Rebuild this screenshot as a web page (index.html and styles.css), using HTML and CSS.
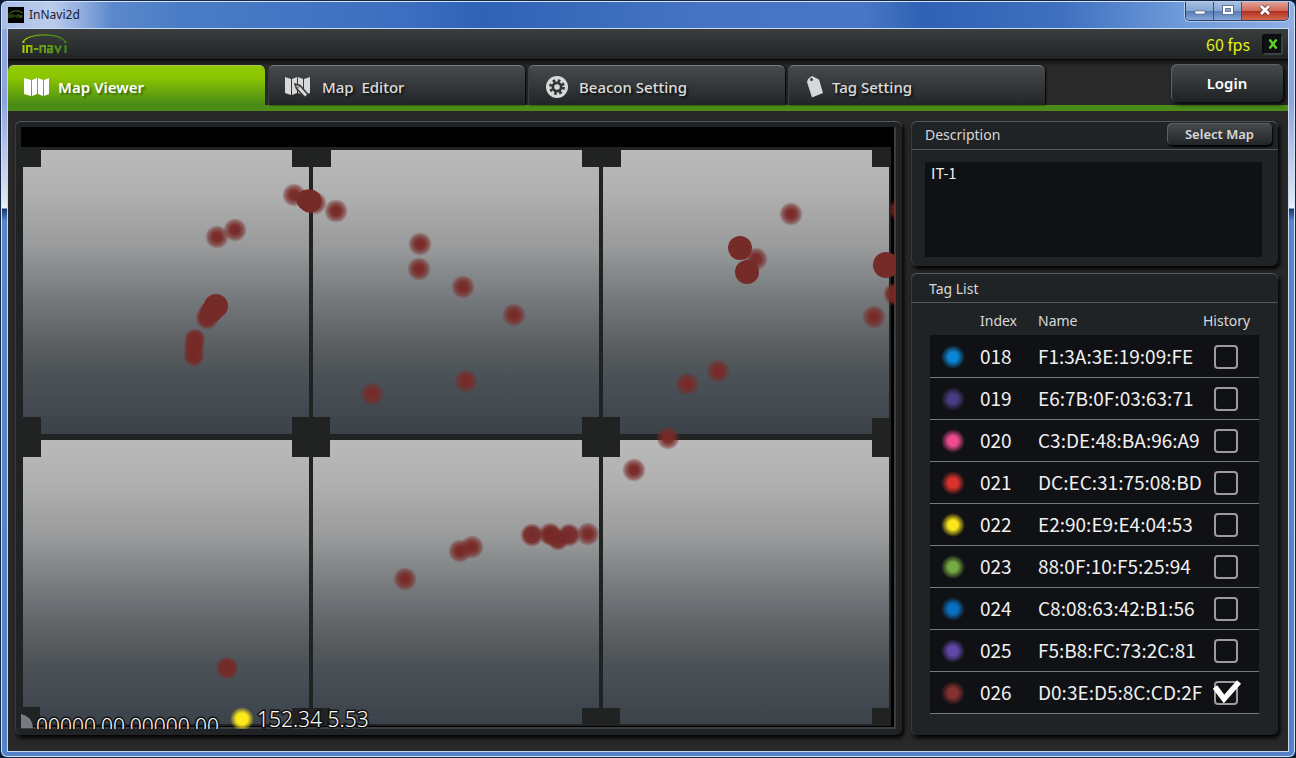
FILE: index.html
```html
<!DOCTYPE html>
<html lang="en">
<head>
<meta charset="utf-8">
<title>InNavi2d</title>
<link rel="stylesheet" href="styles.css">
</head>
<body>
<div class="window">
  <header class="titlebar">
    <svg class="app-icon" width="16" height="16" viewBox="0 0 16 16" aria-hidden="true"><rect width="16" height="16" fill="#000"/><path d="M1 7Q7 1 15 6" fill="none" stroke="#4f7a18"/><path d="M1 7v4M3 11V8h2v3M6 9h2M9 11V8h2v3M12 8l1 3 1-3" fill="none" stroke="#3f6a18"/></svg>
    <span class="window-title">InNavi2d</span>
    <div class="window-buttons">
      <button class="wbtn" aria-label="Minimize"><svg width="12" height="12" viewBox="0 0 12 12"><rect x="1" y="7" width="10" height="3" fill="#fff" stroke="#4c5c7a" stroke-width=".6"/></svg></button>
      <button class="wbtn" aria-label="Maximize"><svg width="12" height="12" viewBox="0 0 12 12"><rect x="2" y="3" width="8" height="6" fill="none" stroke="#45557a" stroke-width="4"/><rect x="2" y="3" width="8" height="6" fill="none" stroke="#fff" stroke-width="2.4"/></svg></button>
      <button class="wbtn wbtn-close" aria-label="Close"><svg width="14" height="12" viewBox="0 0 14 12"><path d="M3 2l8 8M11 2l-8 8" stroke="#6b3038" stroke-width="4.4"/><path d="M3 2l8 8M11 2l-8 8" stroke="#fff" stroke-width="2.8"/></svg></button>
    </div>
  </header>
  <main class="app">
    <div class="brandbar">
      <svg class="logo" width="46" height="20" viewBox="0 0 46 20" role="img" aria-label="in-navi">
        <defs><linearGradient id="brand" x1="0" x2="46" y1="0" y2="0" gradientUnits="userSpaceOnUse"><stop offset="0" stop-color="#b4d000"/><stop offset=".35" stop-color="#6ba414"/><stop offset="1" stop-color="#43831c"/></linearGradient></defs>
        <path d="M1 8C6-1 36-2 44 8" fill="none" stroke="url(#brand)" stroke-width="1.1"/>
        <path d="M1.500 11v8M5 19v-7h4.500v7M12 15h4.500M18.500 19v-7H23v7M25.500 12H30v6.200h-4v-3h4M33 11.500l3 6.500 3-6.500M43.500 11v8M1.500 7v2M43.500 7v2" fill="none" stroke="url(#brand)" stroke-width="2"/>
      </svg>
      <span class="fps">60 fps</span>
      <button class="exit" aria-label="Exit"><svg width="10" height="10" viewBox="0 0 10 10"><path d="M1.500 .5l7 9M8.500 .5l-7 9" stroke="#5fd420" stroke-width="2.400"/></svg></button>
    </div>
    <nav class="tabs">
      <button class="tab tab-active"><svg width="26" height="20" viewBox="0 0 26 20"><path fill="#fff" d="M0 1l7 2v16l-7-2zM8 3l5-2v16l-5 2zM14 1l5 2v16l-5-2zM20 3l5-2v16l-5 2z"/></svg><span>Map Viewer</span></button>
      <button class="tab tab-editor"><svg width="26" height="22" viewBox="0 0 26 22"><path fill="#d8d8d8" d="M1 1l6 2v16l-6-2zM8 3l5-2v16l-5 2zM14 1l5 2v16l-5-2zM20 3l6-2v16l-6 2z"/><path d="M11 8l5 1.500 8 9-3 3-8.500-9z" fill="#d8d8d8" stroke="#35383a" stroke-width="1.500"/><path d="M12.500 13l3.500-3.500" stroke="#35383a"/></svg><span>Map&nbsp; Editor</span></button>
      <button class="tab tab-beacon"><svg width="22" height="22" viewBox="0 0 22 22"><circle cx="11" cy="11" r="11" fill="#d8d8d8"/><circle cx="11" cy="11" r="5.500" fill="#323537"/><circle cx="11" cy="11" r="6.500" fill="none" stroke="#323537" stroke-width="2.800" stroke-dasharray="2.600 2.505"/><circle cx="11" cy="11" r="2.800" fill="#d8d8d8"/></svg><span>Beacon Setting</span></button>
      <button class="tab tab-tag"><svg width="18" height="22" viewBox="0 0 18 22"><path fill="#d8d8d8" d="M2 3L6 0l6 3q1 0 1.500 2L17 17 6 21.500 1 6z"/><circle cx="5.500" cy="3.500" r="1.500" fill="#3b3e40"/></svg><span>Tag Setting</span></button>
      <button class="login">Login</button>
    </nav>
    <div class="content">
      <section class="panel map-panel">
        <svg class="map" width="100%" height="100%" role="img" aria-label="Map with beacon positions">
          <defs>
            <linearGradient id="cell" x1="0" y1="0" x2="0" y2="1"><stop offset="0" stop-color="#bababa"/><stop offset=".15" stop-color="#b0b0b0"/><stop offset=".35" stop-color="#98999a"/><stop offset=".42" stop-color="#888c8d"/><stop offset=".58" stop-color="#6c6f73"/><stop offset=".73" stop-color="#55595b"/><stop offset=".79" stop-color="#4b5359"/><stop offset="1" stop-color="#3b4249"/></linearGradient>
            <radialGradient id="soft"><stop offset="0" stop-color="#792826"/><stop offset=".4" stop-color="#782b29" stop-opacity=".95"/><stop offset=".75" stop-color="#782b29" stop-opacity=".55"/><stop offset="1" stop-color="#782b29" stop-opacity="0"/></radialGradient>
            <radialGradient id="dense"><stop offset="0" stop-color="#752826"/><stop offset=".65" stop-color="#752a28" stop-opacity=".92"/><stop offset="1" stop-color="#782b29" stop-opacity="0"/></radialGradient>
            <radialGradient id="yellow"><stop offset="0" stop-color="#ffed18"/><stop offset=".5" stop-color="#fbe41c"/><stop offset="1" stop-color="#fbe41c" stop-opacity="0"/></radialGradient>
          </defs>
          <g transform="translate(-21 -127)">
            <rect x="21" y="127" width="875" height="602" fill="#000"/>
            <rect x="21" y="147" width="870" height="579" fill="#212222"/>
            <g fill="url(#cell)">
              <rect x="23" y="150" width="286" height="284"/><rect x="313" y="150" width="286" height="284"/><rect x="603" y="150" width="286" height="284"/>
              <rect x="23" y="440" width="286" height="284"/><rect x="313" y="440" width="286" height="284"/><rect x="603" y="440" width="286" height="284"/>
            </g>
            <g fill="#212222">
              <rect x="21" y="147" width="20" height="20"/><rect x="292" y="147" width="39" height="20"/><rect x="582" y="147" width="39" height="20"/><rect x="872" y="147" width="19" height="20"/>
              <rect x="21" y="417" width="20" height="40"/><rect x="292" y="417" width="38" height="40"/><rect x="582" y="417" width="38" height="40"/><rect x="872" y="418" width="19" height="39"/>
              <rect x="21" y="707" width="19" height="19"/><rect x="292" y="708" width="38" height="18"/><rect x="582" y="708" width="38" height="18"/><rect x="872" y="708" width="19" height="18"/>
            </g>
            <path d="M895 127v601M21 728H896" stroke="#3c3d3e" stroke-width="2" fill="none"/>
            <g fill="url(#soft)">
              <circle cx="217" cy="237" r="12"/><circle cx="235" cy="230" r="12"/><circle cx="294" cy="195" r="12"/><circle cx="315" cy="203" r="12"/><circle cx="336" cy="211" r="12"/>
              <circle cx="420" cy="244" r="12"/><circle cx="419" cy="269" r="12"/><circle cx="463" cy="287" r="12"/><circle cx="514" cy="315" r="12"/><circle cx="466" cy="381" r="12"/><circle cx="372" cy="394" r="12"/>
              <circle cx="791" cy="214" r="12"/><circle cx="756" cy="259" r="12"/><circle cx="874" cy="317" r="12"/><circle cx="687" cy="384" r="12"/><circle cx="718" cy="371" r="12"/><circle cx="668" cy="438" r="12"/><circle cx="634" cy="470" r="12"/>
              <circle cx="405" cy="579" r="12"/><circle cx="460" cy="551" r="12"/><circle cx="472" cy="547" r="12"/><circle cx="588" cy="534" r="12"/><circle cx="550" cy="534" r="12"/><circle cx="900" cy="210" r="12"/>
            </g>
            <g fill="url(#dense)">
              <circle cx="195" cy="339" r="11"/><circle cx="194" cy="347" r="11"/><circle cx="194" cy="356" r="11"/><circle cx="207" cy="318" r="12"/><circle cx="210" cy="313" r="12"/>
              <circle cx="532" cy="535" r="12"/><circle cx="551" cy="535" r="11"/><circle cx="558" cy="540" r="11"/><circle cx="569" cy="535" r="12"/><circle cx="227" cy="668" r="12"/><circle cx="895" cy="294" r="12"/>
            </g>
            <g fill="#752b28">
              <circle cx="310" cy="201" r="11.500"/><circle cx="307" cy="200" r="10.500"/><circle cx="216" cy="306" r="12"/><circle cx="212" cy="311" r="11"/><circle cx="740" cy="248" r="12"/><circle cx="747" cy="272" r="12"/><circle cx="886" cy="265" r="13"/>
            </g>
            <path d="M21 714q11 2 12 14H21z" fill="#777a80"/>
            <circle cx="242" cy="719" r="12" fill="url(#yellow)"/>
            <text class="coords" x="36" y="734">00000.00,00000.00</text>
            <text class="coords" x="257" y="727">152.34 5.53</text>
          </g>
        </svg>
      </section>
      <aside class="side">
        <section class="panel description">
          <div class="panel-head"><label for="desc">Description</label><button class="select-map">Select Map</button></div>
          <textarea id="desc" class="desc-text" readonly>IT-1</textarea>
        </section>
        <section class="panel tag-panel">
          <div class="panel-head tag-head"><h2>Tag List</h2></div>
          <table class="tags">
            <thead><tr><th class="c-dot"></th><th class="c-index">Index</th><th class="c-name">Name</th><th class="c-hist">History</th></tr></thead>
            <tbody>
              <tr><td><i class="dot blue"></i></td><td>018</td><td>F1:3A:3E:19:09:FE</td><td class="check"><input type="checkbox" aria-label="History 018"></td></tr>
              <tr><td><i class="dot indigo"></i></td><td>019</td><td>E6:7B:0F:03:63:71</td><td class="check"><input type="checkbox" aria-label="History 019"></td></tr>
              <tr><td><i class="dot pink"></i></td><td>020</td><td>C3:DE:48:BA:96:A9</td><td class="check"><input type="checkbox" aria-label="History 020"></td></tr>
              <tr><td><i class="dot red"></i></td><td>021</td><td>DC:EC:31:75:08:BD</td><td class="check"><input type="checkbox" aria-label="History 021"></td></tr>
              <tr><td><i class="dot yellow"></i></td><td>022</td><td>E2:90:E9:E4:04:53</td><td class="check"><input type="checkbox" aria-label="History 022"></td></tr>
              <tr><td><i class="dot green"></i></td><td>023</td><td>88:0F:10:F5:25:94</td><td class="check"><input type="checkbox" aria-label="History 023"></td></tr>
              <tr><td><i class="dot azure"></i></td><td>024</td><td>C8:08:63:42:B1:56</td><td class="check"><input type="checkbox" aria-label="History 024"></td></tr>
              <tr><td><i class="dot violet"></i></td><td>025</td><td>F5:B8:FC:73:2C:81</td><td class="check"><input type="checkbox" aria-label="History 025"></td></tr>
              <tr><td><i class="dot maroon"></i></td><td>026</td><td>D0:3E:D5:8C:CD:2F</td><td class="check"><input type="checkbox" aria-label="History 026" checked><svg class="tick" width="30" height="26" viewBox="0 0 30 26"><path d="M3 8l9 12L27 3" fill="none" stroke="#fff" stroke-width="5.500"/></svg></td></tr>
            </tbody>
          </table>
        </section>
      </aside>
    </div>
  </main>
</div>
</body>
</html>
```
FILE: styles.css
```css
* { box-sizing: border-box; }
body { margin: 0; background: #0a1a30; font-family: "Noto Sans", sans-serif; color: #d8d8d8; }
button { font: inherit; color: inherit; margin: 0; padding: 0; }
h2 { margin: 0; font: inherit; }

.window {
  min-height: 100vh;
  display: flex;
  flex-direction: column;
  padding: 0 7px 6px;
  border: 1px solid #14284c;
  border-radius: 7px;
  background: linear-gradient(#8fa9dd 0, #8ea4de 100px, #dfe6f2 200px, #eef2f8 207px, #16386f 208px, #5885cb 220px, #5482c8 100%);
  box-shadow: inset 0 0 0 1px #d5e4f7;
}
.titlebar {
  display: flex;
  align-items: center;
  height: 27px;
  margin: 1px -6px 0;
  padding: 0 0 2px 6px;
  border-radius: 6px 6px 0 0;
  background: linear-gradient(90deg, #a9bee6 0, #bccdec 50px, #8fadde 80px, #5b88cc 110px, #4a7cc6 180px, #3c6fc0 400px, #2f63b6 480px, #4674c2 700px, #4a77c5 860px, #2f62b4 920px, #3f70c0 1060px, #6f9bda 1180px, #8fb0e4 100%);
}
.window-title { margin-left: 5px; font-size: 12px; line-height: 16px; color: #16202e; flex: 1; }
.window-buttons {
  display: flex;
  align-self: flex-start;
  margin-right: 5px;
  border: 1px solid #2a3f66;
  border-top: 0;
  border-radius: 0 0 5px 5px;
  overflow: hidden;
  box-shadow: 0 0 0 1px #b5cbec;
}
.wbtn {
  display: flex;
  align-items: center;
  justify-content: center;
  width: 28px;
  height: 18px;
  padding-bottom: 2px;
  border: 0;
  border-right: 1px solid #3c5484;
  background: linear-gradient(#a9c0e2, #86a4d2 48%, #5579b3 50%, #84a8d8);
}
.wbtn-close { width: 46px; border-right: 0; background: linear-gradient(#e0a196, #cf6a5a 48%, #b22c20 50%, #d06a50); }

.app { flex: 1; display: flex; flex-direction: column; background: #282828; outline: 1px solid #c3d9f4; }
.brandbar {
  display: flex;
  align-items: center;
  height: 31px;
  padding: 0 5px 0 14px;
  background: linear-gradient(#3a3e3f, #212425);
  border-bottom: 1px solid #050505;
}
.fps { margin-left: auto; font-family: "Noto Sans CJK KR", sans-serif; font-size: 16px; line-height: 20px; color: #e4f010; }
.exit {
  display: flex;
  align-items: center;
  justify-content: center;
  width: 21px;
  height: 21px;
  margin-left: 12px;
  border: 2px solid #3c4144;
  border-top-color: #0a0b0b;
  border-left-color: #0a0b0b;
  border-radius: 3px;
  background: #0e1011;
}
.tabs {
  display: flex;
  align-items: flex-end;
  gap: 3px;
  height: 51px;
  padding-right: 5px;
  border-bottom: 6px solid #4b8b17;
  background: linear-gradient(#141414, #292929 6px);
}
.tab {
  display: flex;
  align-items: center;
  gap: 8px;
  width: 257px;
  height: 40px;
  padding: 4px 0 0 16px;
  border: 0;
  border-radius: 6px 6px 0 0;
  background: linear-gradient(#474b4d, #222527);
  box-shadow: inset 0 2px 0 -1px #777b7d, inset 1px 0 0 #3a3d3f, 1px 0 2px #000;
  font-size: 15px;
  line-height: 24px;
  font-weight: 500;
  color: #dcdcdc;
  text-shadow: 2px 2px 2px #111;
}
.tab-active { background: linear-gradient(#90ca00, #8cc600 30%, #4a8b18); box-shadow: inset 0 2px 0 -1px #a9c45c; color: #fff; font-weight: 600; text-shadow: 2px 2px 2px #3a6a10; }
.tab-editor { gap: 12px; }
.tab-beacon { padding-left: 18px; gap: 11px; }
.tab-tag { padding-left: 18px; }
.login {
  align-self: flex-start;
  width: 112px;
  height: 38px;
  margin: 4px 0 0 auto;
  border: 0;
  border-radius: 6px;
  background: linear-gradient(#474b4d, #1e2123);
  box-shadow: inset 1px 1px 0 #5d6163, 2px 2px 4px #000;
  font-size: 15px;
  line-height: 24px;
  font-weight: 600;
  color: #fff;
}
.content { flex: 1; display: flex; gap: 9px; padding: 10px 10px 16px 7px; }
.panel {
  border-radius: 6px;
  background: #202325;
  box-shadow: inset 0 1px 0 #56595b, inset 1px 0 0 #37393b, 2px 3px 4px #000;
}
.map-panel { flex: 1; min-width: 0; padding: 6px; display: flex; position: relative; }
.map { display: block; flex: 1; min-width: 0; height: auto; }
.coords { font-family: "Noto Sans", sans-serif; font-weight: 300; font-size: 21px; fill: #fff; stroke: #111; stroke-width: 3px; paint-order: stroke; }

.side { width: 367px; display: flex; flex-direction: column; gap: 7px; }
.description { height: 145px; display: flex; flex-direction: column; }
.panel-head {
  display: flex;
  align-items: center;
  justify-content: space-between;
  height: 29px;
  padding: 0 6px 0 14px;
  border-bottom: 1px solid #55585a;
  font-size: 14px;
  line-height: 20px;
}
.select-map {
  align-self: flex-start;
  margin-top: 2px;
  width: 105px;
  height: 22px;
  border: 0;
  border-radius: 5px;
  background: linear-gradient(#484c4e, #222527);
  box-shadow: inset 1px 1px 0 #5c6062, 1px 2px 2px #000;
  font-size: 13px;
  line-height: 20px;
  font-weight: 600;
}
.desc-text {
  flex: 1;
  margin: 12px 16px 9px 14px;
  padding: 1px 6px;
  border: 0;
  resize: none;
  background: #101114;
  color: #eee;
  font-family: "Noto Sans CJK KR", sans-serif;
  font-size: 15px;
  line-height: 20px;
}
.tag-panel { flex: 1; }
.tag-head { height: 30px; padding: 2px 0 0 18px; }
.tags { width: calc(100% - 38px); margin: 3px 0 0 19px; table-layout: fixed; border-collapse: collapse; }
.tags th { height: 29px; padding: 0; text-align: left; font-size: 14px; line-height: 20px; font-weight: 400; }
.c-dot { width: 50px; }
.c-index { width: 58px; }
.tags th.c-hist { width: 56px; }
.tags td {
  height: 42px;
  padding: 0;
  border-bottom: 1px solid #77797a;
  background: #101114;
  color: #f0f0f0;
  font-family: "Noto Sans CJK KR", sans-serif;
  font-size: 19px;
  line-height: 26px;
  white-space: nowrap;
}
.dot { display: block; width: 24px; height: 24px; margin: 2px 0 0 11px; border-radius: 50%; background: radial-gradient(circle closest-side, var(--tag) 40%, transparent); }
.blue { --tag: #0a86d4; }
.indigo { --tag: #483d80; }
.pink { --tag: #ec4b90; }
.red { --tag: #d8322c; }
.yellow { --tag: #fbe61c; }
.green { --tag: #76aa42; }
.azure { --tag: #0870c0; }
.violet { --tag: #6048aa; }
.maroon { --tag: #843230; }
.check { position: relative; }
.check input { display: block; appearance: none; width: 24px; height: 24px; margin: 2px 0 0 11px; border: 2px solid #9c9c9c; border-radius: 4px; }
.tick { position: absolute; left: 9px; top: 7px; }
```
